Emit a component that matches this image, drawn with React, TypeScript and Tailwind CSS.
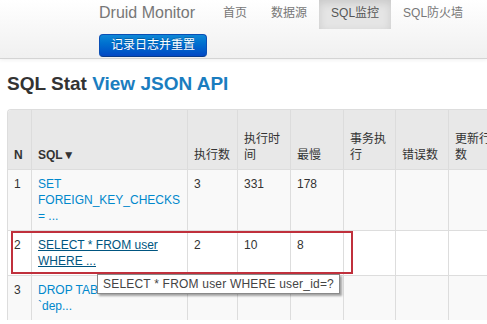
import React from "react";

const FONT = { fontFamily: '"Liberation Sans", Arial, "Noto Sans CJK SC", sans-serif' };

const cols = "grid grid-cols-[23px_156px_50px_53px_53px_52px_53px_60px_80px]";

function HeadCell({ children, bold = false, first = false }: { children: React.ReactNode; bold?: boolean; first?: boolean }) {
  return (
    <div
      className={`${first ? "" : "border-l border-[#dcdcdc]"} flex items-end px-[6px] pb-[6px] text-[12px] leading-[16px] text-[#333] ${
        bold ? "font-bold" : "font-normal"
      }`}
    >
      <div>{children}</div>
    </div>
  );
}

function Cell({ children, first = false }: { children?: React.ReactNode; first?: boolean }) {
  return (
    <div className={`${first ? "" : "border-l border-[#dddddd]"} px-[6px] py-[6px] text-[12px] leading-[16px] text-[#333]`}>
      {children}
    </div>
  );
}

type Row = { n: string; sql: React.ReactNode; cnt: string; time: string; slow: string; bg: string };

export default function App() {
  const rows: Row[] = [
    {
      n: "1",
      sql: <span className="text-[#0088cc]">SET FOREIGN_KEY_CHECKS = ...</span>,
      cnt: "3",
      time: "331",
      slow: "178",
      bg: "bg-[#f9f9f9]",
    },
    {
      n: "2",
      sql: <span className="text-[#005580] underline">SELECT * FROM user WHERE ...</span>,
      cnt: "2",
      time: "10",
      slow: "8",
      bg: "bg-white",
    },
    {
      n: "3",
      sql: <span className="text-[#0088cc]">DROP TABLE IF EXISTS `dep...</span>,
      cnt: "",
      time: "",
      slow: "",
      bg: "bg-[#f9f9f9]",
    },
  ];

  return (
    <div className="relative w-[487px] h-[324px] overflow-hidden bg-white" style={FONT}>
      {/* Navbar */}
      <div className="h-[59px] border-b border-[#d4d4d4] bg-gradient-to-b from-[#ffffff] to-[#f0f0f0] shadow-[0_1px_4px_rgba(0,0,0,0.065)] pl-[99px]">
        <div className="flex h-[29px] items-start">
          <div className="mr-[16px] text-[16px] leading-[26px] text-[#777]">Druid Monitor</div>
          <div className="h-[29px] px-[12px] text-[12px] leading-[26px] text-[#777]">首页</div>
          <div className="h-[29px] px-[12px] text-[12px] leading-[26px] text-[#777]">数据源</div>
          <div className="h-[29px] px-[12px] text-[12px] leading-[26px] text-[#555] bg-[#e5e5e5] shadow-[inset_0_3px_8px_rgba(0,0,0,0.125)]">
            SQL监控
          </div>
          <div className="h-[29px] px-[12px] text-[12px] leading-[26px] text-[#777]">SQL防火墙</div>
        </div>
        <div className="mt-[5px] flex">
          <div className="h-[23px] rounded-[4px] border border-[#0a4fb5] border-b-[#073b8a] bg-gradient-to-b from-[#0f88d6] to-[#0448c4] px-[11px] text-[12px] leading-[21px] text-white [text-shadow:0_-1px_0_rgba(0,0,0,0.25)]">
            记录日志并重置
          </div>
        </div>
      </div>

      {/* Heading */}
      <div className="mt-[13px] pl-[7px] h-[24px] text-[19px] font-bold leading-[24px] text-[#333] whitespace-nowrap">
        SQL Stat <span className="text-[#1a7dbf]">View JSON API</span>
      </div>

      {/* Table */}
      <div className="mt-[13px] ml-[7px] w-[600px] rounded-tl-[4px] border-l border-t border-[#dddddd] overflow-hidden">
        <div className={`${cols} h-[59px] bg-[#e8e8e8]`}>
          <HeadCell bold first>N</HeadCell>
          <HeadCell bold>SQL▼</HeadCell>
          <HeadCell>执行数</HeadCell>
          <HeadCell>执行时间</HeadCell>
          <HeadCell>最慢</HeadCell>
          <HeadCell>事务执行</HeadCell>
          <HeadCell>错误数</HeadCell>
          <HeadCell>更新行数</HeadCell>
          <HeadCell>读取行数</HeadCell>
        </div>
        {rows.map((r) => (
          <div key={r.n} className={`${cols} border-t border-[#dddddd] ${r.bg}`}>
            <Cell first>{r.n}</Cell>
            <Cell>{r.sql}</Cell>
            <Cell>{r.cnt}</Cell>
            <Cell>{r.time}</Cell>
            <Cell>{r.slow}</Cell>
            <Cell />
            <Cell />
            <Cell />
            <Cell />
          </div>
        ))}
      </div>

      {/* Red highlight box */}
      <div className="absolute left-[11px] top-[231px] w-[342px] h-[43px] border-2 border-[#c0303c]" />

      {/* Tooltip */}
      <div className="absolute left-[97px] top-[274px] h-[20px] border border-[#8a8a8a] bg-white px-[5px] text-[12px] leading-[18px] tracking-[0.2px] text-[#444] whitespace-nowrap shadow-[2px_2px_2px_rgba(0,0,0,0.35)]">
        SELECT * FROM user WHERE user_id=?
      </div>
    </div>
  );
}
